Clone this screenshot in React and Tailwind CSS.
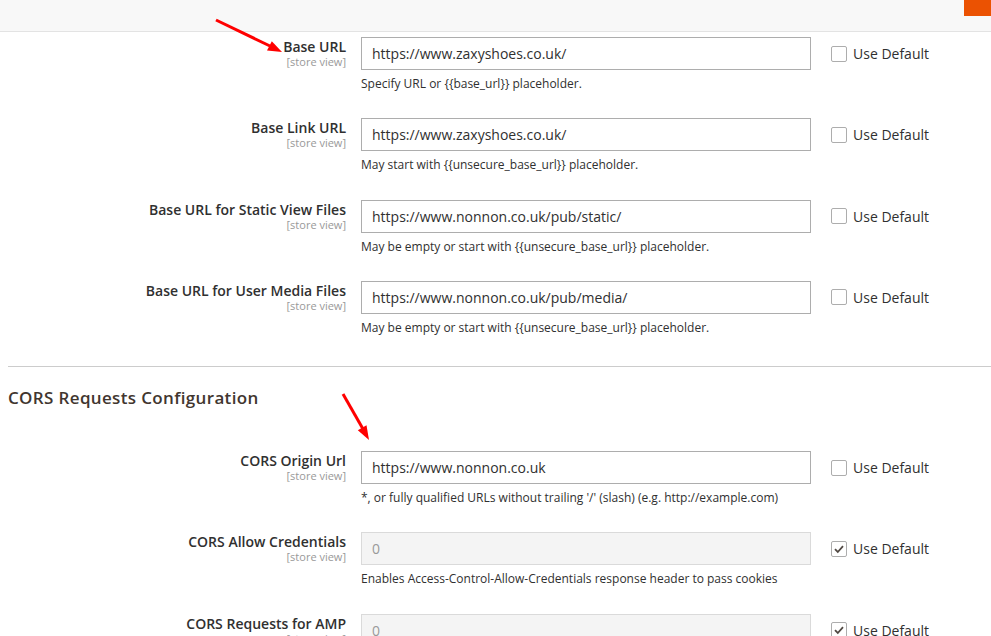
import React from 'react';

const font = { fontFamily: '"Open Sans", "Liberation Sans", sans-serif' };

function Checkbox({ checked }) {
  return (
    <span className="w-[16px] h-[16px] border border-[#adadad] rounded-[2px] bg-white flex items-center justify-center flex-shrink-0">
      {checked && (
        <svg width="12" height="12" viewBox="0 0 12 12">
          <path d="M2 6.2 L4.8 9 L10 3.2" fill="none" stroke="#514943" strokeWidth="1.8" />
        </svg>
      )}
    </span>
  );
}

function Row({ label, value, note, disabled, checked }) {
  return (
    <div className="flex h-[81.25px]">
      <div className="w-[346px] flex-shrink-0 text-right">
        <div className="text-[14px] leading-[19px] font-semibold text-[#303030]">{label}</div>
        <div className="text-[11px] leading-[12px] text-[#999]">[store view]</div>
      </div>
      <div className="ml-[15px] w-[450px] flex-shrink-0">
        <div
          className={`h-[33px] border px-[10px] flex items-center text-[14px] ${
            disabled ? 'bg-[#f4f4f4] border-[#dadada] text-[#999]' : 'bg-white border-[#adadad] text-[#303030]'
          }`}
        >
          {value}
        </div>
        {note && <div className="mt-[6px] text-[12px] leading-[16px] text-[#303030]">{note}</div>}
      </div>
      <div className="ml-[20px] h-[33px] flex items-center gap-[6px]">
        <Checkbox checked={checked} />
        <span className="text-[14px] text-[#303030]">Use Default</span>
      </div>
    </div>
  );
}

export default function App() {
  return (
    <div className="relative w-[991px] h-[636px] overflow-hidden bg-white" style={font}>
      {/* Top bar */}
      <div className="h-[32px] bg-[#f8f8f8] border-b border-[#e3e3e3] flex justify-end">
        <div className="w-[27px] h-[16px] bg-[#eb5202]" />
      </div>

      <div className="pt-[5px]">
        <Row label="Base URL" value="https://www.zaxyshoes.co.uk/" note="Specify URL or {{base_url}} placeholder." />
        <Row label="Base Link URL" value="https://www.zaxyshoes.co.uk/" note="May start with {{unsecure_base_url}} placeholder." />
        <Row
          label="Base URL for Static View Files"
          value="https://www.nonnon.co.uk/pub/static/"
          note="May be empty or start with {{unsecure_base_url}} placeholder."
        />
        <Row
          label="Base URL for User Media Files"
          value="https://www.nonnon.co.uk/pub/media/"
          note="May be empty or start with {{unsecure_base_url}} placeholder."
        />
      </div>

      <div className="ml-[8px] mt-[4px] border-t border-[#cccccc]" />
      <h2 className="ml-[8px] mt-[19px] text-[17px] leading-[24px] font-semibold tracking-[0.35px] text-[#41362f]">
        CORS Requests Configuration
      </h2>

      <div className="mt-[41px]">
        <Row
          label="CORS Origin Url"
          value="https://www.nonnon.co.uk"
          note="*, or fully qualified URLs without trailing '/' (slash) (e.g. http://example.com)"
        />
        <Row
          label="CORS Allow Credentials"
          value="0"
          disabled
          checked
          note="Enables Access-Control-Allow-Credentials response header to pass cookies"
        />
        <Row label="CORS Requests for AMP" value="0" disabled checked />
      </div>

      {/* Red annotation arrows */}
      <svg className="absolute left-0 top-0 pointer-events-none" width="991" height="636">
        <line x1="216" y1="20" x2="270" y2="46" stroke="#ff0000" strokeWidth="3" />
        <polygon points="282,52 267,50.6 271.8,41.2" fill="#ff0000" />
        <line x1="343" y1="394" x2="363" y2="429" stroke="#ff0000" strokeWidth="3" />
        <polygon points="369,440 357.8,430.3 366.5,425.3" fill="#ff0000" />
      </svg>
    </div>
  );
}
